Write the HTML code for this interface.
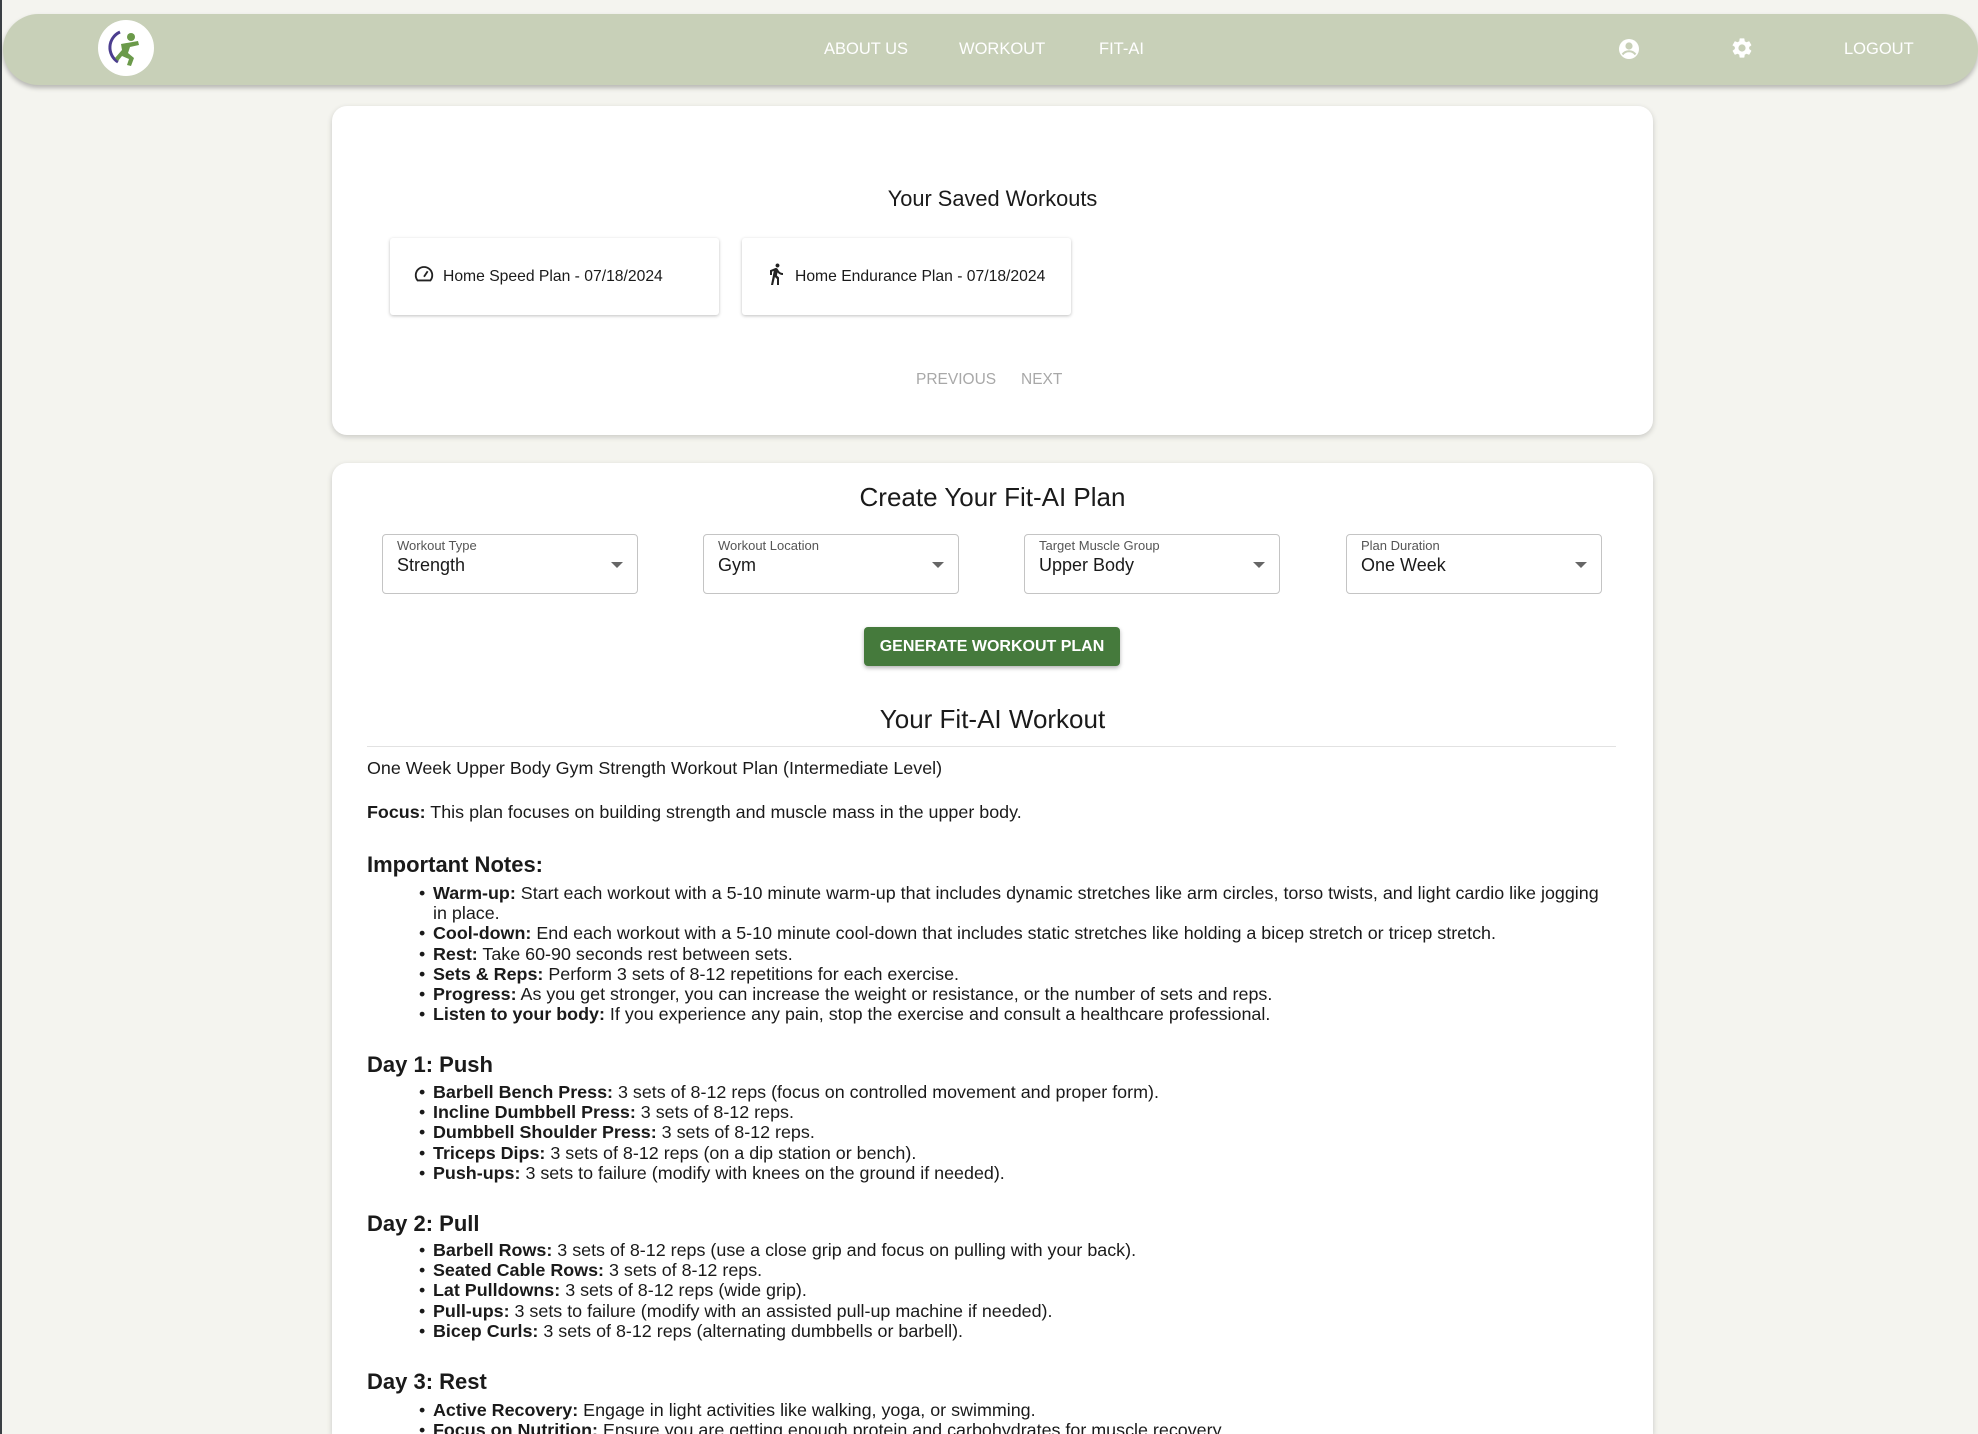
<!DOCTYPE html>
<html style="overflow:hidden;width:1978px;height:1434px"><head><meta charset="utf-8"><style>
*{margin:0;padding:0;box-sizing:border-box}
body{width:1978px;height:1434px;overflow:hidden;background:#f4f4ef;font-family:"Liberation Sans",Arial,sans-serif;color:#1a1a1a;position:relative}
.a{position:absolute}
.nav{left:3px;top:14px;width:1975px;height:71px;background:#c8d0b8;border-radius:36px;box-shadow:0 3px 5px rgba(0,0,0,.25)}
.nl{color:#fff;font-size:16.5px;top:40px}
.card{background:#fff;border-radius:15px;box-shadow:0 2px 6px rgba(0,0,0,.18)}
.sc{background:#fff;border-radius:3px;box-shadow:0 1px 3px rgba(0,0,0,.25);height:77px;width:329px;top:238px}
.sc span{position:absolute;left:53px;top:30px;font-size:15.7px}
.sel{top:534px;width:256px;height:60px;border:1px solid #c4c4c4;border-radius:4px;background:#fff}
.sel .l{position:absolute;left:14px;top:3px;font-size:13px;color:#555}
.sel .v{position:absolute;left:14px;top:20px;font-size:18px}
.sel .t{position:absolute;right:14px;top:27px;width:0;height:0;border-left:6px solid transparent;border-right:6px solid transparent;border-top:6px solid #666}
.h{font-size:17.9px;font-weight:400;line-height:20.2px}
.h b{font-weight:700}
ul{list-style:none}
li{position:relative;padding-left:0}
li:before{content:"•";position:absolute;left:-14px}
.hd{font-size:22px;font-weight:700}
</style></head><body>
<div class="a" style="left:0;top:0;width:2px;height:1434px;background:#3a3f44"></div>
<div class="a nav"></div>
<div class="a" style="left:98px;top:20px;width:56px;height:56px;border-radius:50%;background:#fff">
<svg width="56" height="56" viewBox="0 0 56 56"><path d="M22 12 A17 17 0 0 0 20 42" fill="none" stroke="#4b3d8f" stroke-width="3"/><circle cx="33" cy="17" r="4" fill="#6b9a4a"/><path d="M23 24 L40 21 L41 25 L32 27 L30 33 L36 38 L33 46 L29 45 L31 39 L24 36 L20 41 L17 38 L24 30 Z" fill="#6b9a4a"/></svg></div>
<div class="a nl" style="left:824px">ABOUT US</div>
<div class="a nl" style="left:959px">WORKOUT</div>
<div class="a nl" style="left:1099px">FIT-AI</div>
<svg class="a" style="left:1617px;top:37px" width="24" height="24" viewBox="0 0 24 24"><circle cx="12" cy="12" r="10" fill="#fff"/><circle cx="12" cy="9" r="3.6" fill="#c8d0b8"/><path d="M5.5 17.5c1.6-2.3 3.9-3.3 6.5-3.3s4.9 1 6.5 3.3" fill="none" stroke="#c8d0b8" stroke-width="2"/></svg>
<svg class="a" style="left:1730px;top:36px" width="24" height="24" viewBox="0 0 24 24"><path fill="#fff" d="M19.14 12.94c.04-.3.06-.61.06-.94s-.02-.64-.07-.94l2.030-1.58a.49.49 0 0 0 .12-.61l-1.92-3.32a.49.49 0 0 0-.59-.22l-2.39.96c-.5-.38-1.03-.7-1.62-.94l-.36-2.54a.48.48 0 0 0-.48-.41h-3.84c-.24 0-.43.17-.47.41l-.36 2.54c-.59.24-1.130.57-1.62.94l-2.39-.96a.48.48 0 0 0-.59.22L2.74 8.87c-.12.21-.8.47.12.61l2.03 1.58c-.05.3-.09.63-.09.94s.02.64.07.94l-2.03 1.58a.49.49 0 0 0-.12.61l1.92 3.320c.12.22.37.29.59.22l2.39-.96c.5.38 1.03.7 1.62.94l.36 2.54c.05.24.24.41.48.41h3.84c.24 0 .44-.17.47-.41l.36-2.54c.59-.24 1.13-.56 1.62-.94l2.39.96c.22.08.47 0 .59-.22l1.92-3.32c.12-.22.07-.47-.12-.61zM12 15.6A3.6 3.6 0 1 1 12 8.4a3.6 3.6 0 0 1 0 7.2z"/></svg>
<div class="a nl" style="left:1844px">LOGOUT</div>

<div class="a card" style="left:332px;top:106px;width:1321px;height:329px"></div>
<div class="a" style="left:332px;width:1321px;top:186px;text-align:center;font-size:21.8px">Your Saved Workouts</div>
<div class="a sc" style="left:390px"><svg class="a" style="left:23px;top:25px" width="22" height="22" viewBox="0 0 24 24"><path fill="none" stroke="#222" stroke-width="2" d="M5 19a9 9 0 1 1 14 0z"/><path stroke="#222" stroke-width="2" d="M12 15l4-6"/></svg><span>Home Speed Plan - 07/18/2024</span></div>
<div class="a sc" style="left:742px"><svg class="a" style="left:22px;top:23px" width="24" height="26" viewBox="0 0 24 24"><path fill="#222" d="M13.5 5.5c1.1 0 2-.9 2-2s-.9-2-2-2-2 .9-2 2 .9 2 2 2zM9.8 8.9L7 23h2.1l1.8-8 2.1 2v6h2v-7.5l-2.1-2 .6-3C14.8 12 16.8 13 19 13v-2c-1.9 0-3.5-1-4.3-2.4l-1-1.6c-.4-.6-1-1-1.7-1-.3 0-.5.1-.8.1L6 8.3V13h2V9.6l1.8-.7"/></svg><span>Home Endurance Plan - 07/18/2024</span></div>
<div class="a" style="left:916px;top:371px;font-size:15.5px;color:#a8a8a8">PREVIOUS</div>
<div class="a" style="left:1021px;top:371px;font-size:15.5px;color:#a8a8a8">NEXT</div>

<div class="a card" style="left:332px;top:463px;width:1321px;height:971px;border-bottom-left-radius:0;border-bottom-right-radius:0"></div>
<div class="a" style="left:332px;width:1321px;top:482px;text-align:center;font-size:26px">Create Your Fit-AI Plan</div>
<div class="a sel" style="left:382px"><div class="l">Workout Type</div><div class="v">Strength</div><div class="t"></div></div>
<div class="a sel" style="left:703px"><div class="l">Workout Location</div><div class="v">Gym</div><div class="t"></div></div>
<div class="a sel" style="left:1024px"><div class="l">Target Muscle Group</div><div class="v">Upper Body</div><div class="t"></div></div>
<div class="a sel" style="left:1346px"><div class="l">Plan Duration</div><div class="v">One Week</div><div class="t"></div></div>
<div class="a" style="left:864px;top:627px;width:256px;height:39px;background:#457a3c;border-radius:4px;box-shadow:0 2px 4px rgba(0,0,0,.3);color:#fff;font-size:16px;font-weight:700;text-align:center;line-height:39px">GENERATE WORKOUT PLAN</div>
<div class="a" style="left:332px;width:1321px;top:704px;text-align:center;font-size:26px">Your Fit-AI Workout</div>
<div class="a" style="left:367px;top:746px;width:1249px;height:1px;background:#e2e2e2"></div>
<div class="a h" style="left:367px;top:758px">One Week Upper Body Gym Strength Workout Plan (Intermediate Level)</div>
<div class="a h" style="left:367px;top:802px"><b>Focus:</b> This plan focuses on building strength and muscle mass in the upper body.</div>
<div class="a hd" style="left:367px;top:852px">Important Notes:</div>
<ul class="a h" style="left:433px;top:883px;width:1170px">
<li><b>Warm-up:</b> Start each workout with a 5-10 minute warm-up that includes dynamic stretches like arm circles, torso twists, and light cardio like jogging in place.</li>
<li><b>Cool-down:</b> End each workout with a 5-10 minute cool-down that includes static stretches like holding a bicep stretch or tricep stretch.</li>
<li><b>Rest:</b> Take 60-90 seconds rest between sets.</li>
<li><b>Sets &amp; Reps:</b> Perform 3 sets of 8-12 repetitions for each exercise.</li>
<li><b>Progress:</b> As you get stronger, you can increase the weight or resistance, or the number of sets and reps.</li>
<li><b>Listen to your body:</b> If you experience any pain, stop the exercise and consult a healthcare professional.</li>
</ul>
<div class="a hd" style="left:367px;top:1052px">Day 1: Push</div>
<ul class="a h" style="left:433px;top:1082px;width:1188px">
<li><b>Barbell Bench Press:</b> 3 sets of 8-12 reps (focus on controlled movement and proper form).</li>
<li><b>Incline Dumbbell Press:</b> 3 sets of 8-12 reps.</li>
<li><b>Dumbbell Shoulder Press:</b> 3 sets of 8-12 reps.</li>
<li><b>Triceps Dips:</b> 3 sets of 8-12 reps (on a dip station or bench).</li>
<li><b>Push-ups:</b> 3 sets to failure (modify with knees on the ground if needed).</li>
</ul>
<div class="a hd" style="left:367px;top:1211px">Day 2: Pull</div>
<ul class="a h" style="left:433px;top:1240px;width:1188px">
<li><b>Barbell Rows:</b> 3 sets of 8-12 reps (use a close grip and focus on pulling with your back).</li>
<li><b>Seated Cable Rows:</b> 3 sets of 8-12 reps.</li>
<li><b>Lat Pulldowns:</b> 3 sets of 8-12 reps (wide grip).</li>
<li><b>Pull-ups:</b> 3 sets to failure (modify with an assisted pull-up machine if needed).</li>
<li><b>Bicep Curls:</b> 3 sets of 8-12 reps (alternating dumbbells or barbell).</li>
</ul>
<div class="a hd" style="left:367px;top:1369px">Day 3: Rest</div>
<ul class="a h" style="left:433px;top:1400px;width:1188px">
<li><b>Active Recovery:</b> Engage in light activities like walking, yoga, or swimming.</li>
<li><b>Focus on Nutrition:</b> Ensure you are getting enough protein and carbohydrates for muscle recovery.</li>
</ul>
</body></html>
